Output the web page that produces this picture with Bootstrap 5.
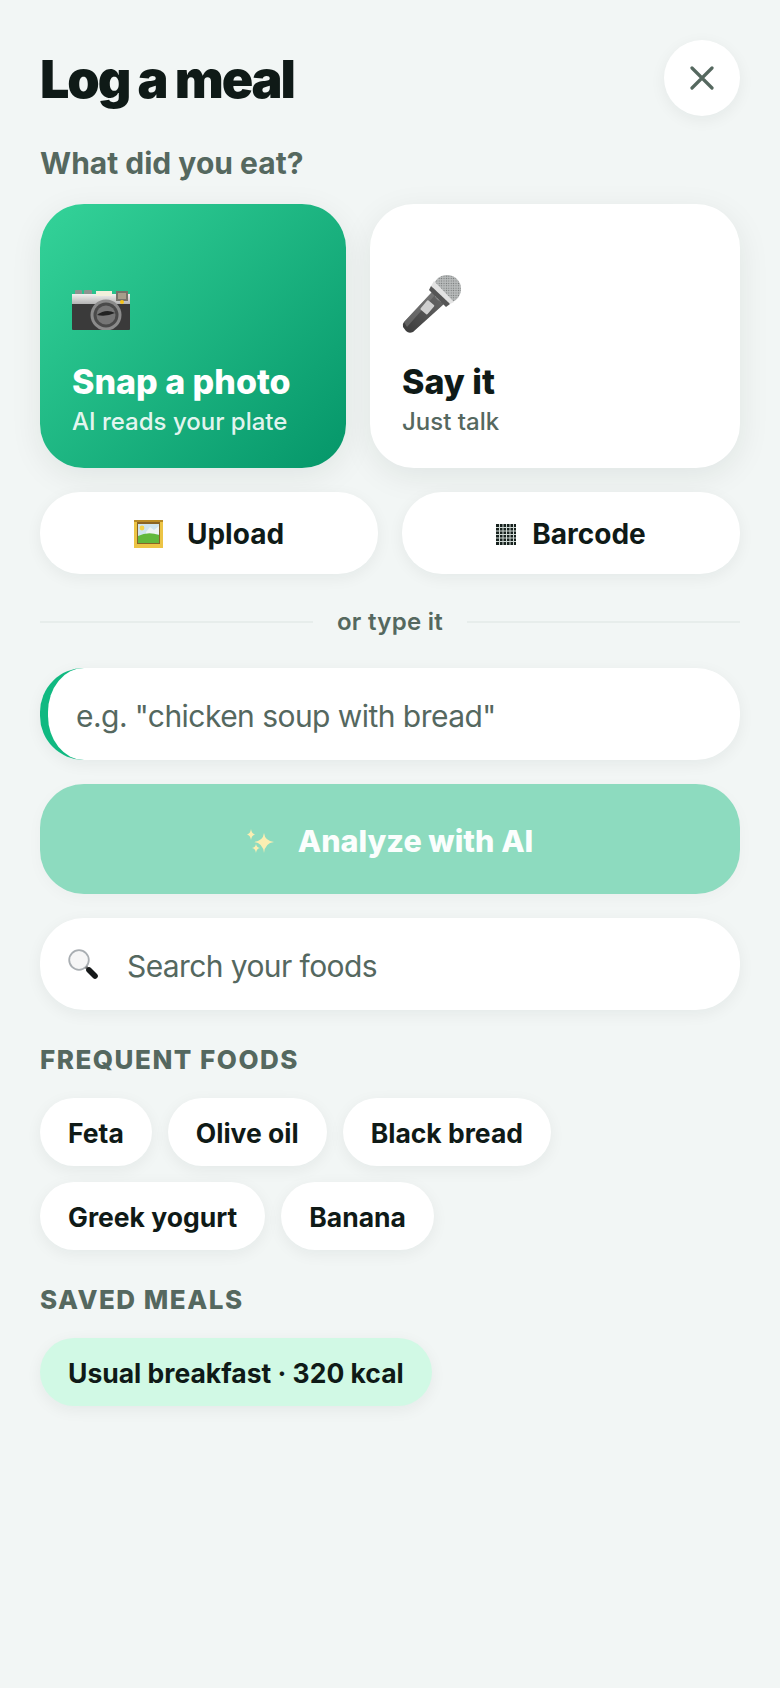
<!DOCTYPE html>
<html lang="en">
  <head>
    <meta charset="UTF-8" />
    <meta name="viewport" content="width=device-width, initial-scale=1.0" />
    <title>Log a meal</title>
    <link
      href="https://cdn.jsdelivr.net/npm/bootstrap@5.3.0/dist/css/bootstrap.min.css"
      rel="stylesheet"
    />
    <style>
      body {
        background: #f2f6f5;
        color: #0f1a17;
        font-family: Inter, "Liberation Sans", sans-serif;
      }
      .sheet {
        padding: 40px 40px 40px;
      }
      .sheet-title {
        font-size: 52px;
        font-weight: 900;
        letter-spacing: -2.1px;
        line-height: 80px;
        height: 76px;
        margin: 0;
      }
      .close-btn {
        width: 76px;
        height: 76px;
        background: #fff;
        border: 0;
        box-shadow: 0 4px 16px rgba(15, 40, 30, 0.06);
      }
      .ask-label {
        color: #55685f;
        font-size: 30px;
        font-weight: 700;
        line-height: 36px;
        margin: 29px 0 23px;
      }
      .big-card {
        height: 264px;
        border-radius: 44px;
        padding: 0 32px 30px;
        background: #fff;
        box-shadow: 0 8px 32px rgba(15, 40, 30, 0.08);
      }
      .big-card.snap {
        flex: 0 0 306px;
        color: #fff;
        background: linear-gradient(135deg, #34d399, #059669);
      }
      .big-card.say {
        flex: 1 1 0;
      }
      .big-card h2 {
        font-size: 34px;
        font-weight: 800;
        line-height: 40px;
        margin: 0;
      }
      .big-card p {
        color: #55685f;
        font-size: 24px;
        font-weight: 500;
        line-height: 32px;
        margin: 4px 0 0;
      }
      .big-card.snap p {
        color: rgba(255, 255, 255, 0.9);
      }
      .snap .tile-icon {
        margin-bottom: 32px;
      }
      .say .tile-icon {
        margin-bottom: 28px;
      }
      .row-gap {
        gap: 24px;
      }
      .small-btn {
        flex: 1 1 0;
        height: 82px;
        padding-top: 8px;
        border-radius: 40px;
        background: #fff;
        color: #0f1a17;
        font-size: 28px;
        font-weight: 700;
        box-shadow: 0 4px 16px rgba(15, 40, 30, 0.06);
      }
      .or-row {
        color: #55685f;
        font-size: 24px;
        font-weight: 600;
        letter-spacing: 0.3px;
        line-height: 32px;
        margin: 31px 0 30px;
      }
      .or-row span {
        padding-top: 1px;
      }
      .or-row i {
        flex: 1 1 0;
        height: 2px;
        background: #e7edeb;
      }
      .text-box,
      .search-box {
        height: 92px;
        border-radius: 44px;
        background: #fff;
        box-shadow: 0 4px 16px rgba(15, 40, 30, 0.06);
      }
      .text-box {
        border: 0;
        border-left: 8px solid #10b981;
        padding: 3px 28px 0;
        font-size: 30px;
        letter-spacing: -0.55px;
      }
      .text-box:focus,
      .search-input:focus {
        outline: 0;
        box-shadow: none;
      }
      .text-box::placeholder,
      .search-input::placeholder {
        color: #55685f;
        opacity: 1;
      }
      .analyze-btn {
        height: 110px;
        padding-top: 10px;
        border: 0;
        border-radius: 44px;
        background: #8ddbbf;
        color: #fbfefd;
        font-size: 30.5px;
        font-weight: 800;
        box-shadow: 0 4px 16px rgba(15, 40, 30, 0.03);
      }
      .search-box {
        padding-left: 28px;
      }
      .search-input {
        border: 0;
        background: transparent;
        color: #0f1a17;
        font-size: 30px;
        letter-spacing: -0.6px;
        padding: 4px 0 0 29px;
        width: 100%;
      }
      .group-label {
        color: #55685f;
        font-size: 26px;
        font-weight: 800;
        letter-spacing: 1.5px;
        line-height: 32px;
        margin: 0 0 22px;
      }
      .frequent {
        margin-top: 34px;
      }
      .saved-label {
        margin-top: 34px;
      }
      .chip-wrap {
        gap: 16px;
      }
      .chip {
        height: 68px;
        padding: 3px 28px 0;
        border-radius: 34px;
        background: #fff;
        color: #0f1a17;
        font-size: 26.5px;
        font-weight: 700;
        box-shadow: 0 4px 16px rgba(15, 40, 30, 0.06);
      }
      .chip.saved {
        background: #d1f9e5;
      }
      .frequent-chips {
        width: 560px;
      }
    </style>
  </head>
  <body>
    <div class="sheet">
      <div class="d-flex justify-content-between align-items-center">
        <h1 class="sheet-title">Log a meal</h1>
        <button class="close-btn rounded-circle d-flex align-items-center justify-content-center p-0" aria-label="Close">
          <svg width="24" height="24" viewBox="0 0 24 24">
            <path d="M2 2 L22 22 M22 2 L2 22" stroke="#55685f" stroke-width="3.2" stroke-linecap="round" fill="none" />
          </svg>
        </button>
      </div>

      <div class="ask-label">What did you eat?</div>

      <!-- Two big tiles -->
      <div class="d-flex row-gap">
        <div class="big-card snap d-flex flex-column justify-content-end">
          <svg class="tile-icon" width="58" height="40" viewBox="0 0 58 40">
            <defs>
              <linearGradient id="band" x1="0" y1="0" x2="0" y2="1">
                <stop offset="0" stop-color="#f1f1ef" />
                <stop offset="1" stop-color="#b4b4b4" />
              </linearGradient>
            </defs>
            <rect x="3" y="0" width="7" height="6" rx="1" fill="#8d9491" />
            <rect x="12" y="0" width="8" height="6" rx="1" fill="#8d9491" />
            <rect x="0" y="4" width="58" height="36" rx="1" fill="#3a3a3a" />
            <rect x="0" y="4" width="58" height="10" fill="url(#band)" />
            <rect x="24" y="1" width="16" height="5" fill="#f2f0dc" />
            <rect x="44" y="1" width="12" height="10" fill="#77736a" />
            <rect x="46" y="3" width="8" height="6" fill="#a79e8b" />
            <circle cx="34" cy="25" r="15.5" fill="#8b8b8b" />
            <circle cx="34" cy="25" r="12.5" fill="#4a4a4a" />
            <circle cx="34" cy="25" r="9.5" fill="#767676" />
            <path d="M25 25 Q34 18 43 23 Q34 27 25 25 Z" fill="#222" />
            <circle cx="50" cy="12" r="2" fill="#f5c518" />
          </svg>
          <h2>Snap a photo</h2>
          <p>AI reads your plate</p>
        </div>
        <div class="big-card say d-flex flex-column justify-content-end">
          <svg class="tile-icon" width="59" height="59" viewBox="0 0 59 59">
            <defs>
              <linearGradient id="grip" x1="0" y1="1" x2="1" y2="0">
                <stop offset="0" stop-color="#3a3a3a" />
                <stop offset="1" stop-color="#6a6a6a" />
              </linearGradient>
              <pattern id="mesh" width="2.4" height="2.4" patternUnits="userSpaceOnUse">
                <rect width="2.4" height="2.4" fill="#b8bbbb" />
                <circle cx="1.2" cy="1.2" r="0.6" fill="#6f7272" />
              </pattern>
            </defs>
            <path d="M30 17 L42 29 L11 57 Q7 59 4 56 L1 52 Q0 49 2 47 Z" fill="url(#grip)" />
            <path d="M2 47 L30 17 L33 20 L5 52 Z" fill="#8a8a8a" opacity="0.45" />
            <rect x="21" y="26" width="9" height="12" rx="1" transform="rotate(40 25 32)" fill="#d0d0d0" />
            <circle cx="45" cy="14" r="14" fill="url(#mesh)" />
            <path d="M32 6 L52 27 L48 29 L29 11 Z" fill="#e2e2e2" />
            <path d="M29 11 L48 29 L44 32 L27 15 Z" fill="#555" />
          </svg>
          <h2>Say it</h2>
          <p>Just talk</p>
        </div>
      </div>

      <div class="d-flex row-gap mt-4">
        <button class="small-btn btn border-0 d-flex align-items-center justify-content-center">
          <svg class="me-4" width="29" height="28" viewBox="0 0 29 28">
            <rect width="29" height="28" fill="#ecc445" />
            <rect x="0" y="0" width="29" height="2" fill="#b98a24" />
            <rect x="3" y="2" width="23" height="22" fill="#8a6425" />
            <rect x="4" y="4" width="21" height="19" fill="#cfe4ee" />
            <circle cx="8" cy="8" r="2.4" fill="#f4d34a" />
            <path d="M12 12 L16 7 L20 10 L25 6 V14 H12 Z" fill="#eef3f4" />
            <path d="M4 16 Q14 11 25 15 V23 H4 Z" fill="#62b83c" />
          </svg>
          Upload
        </button>
        <button class="small-btn btn border-0 d-flex align-items-center justify-content-center">
          <svg class="me-3" width="20" height="21" viewBox="0 0 20 21">
            <rect width="20" height="21" fill="#17211e" />
            <path d="M3.5 0 V21 M7 0 V21 M10.5 0 V21 M14 0 V21 M17.5 0 V21 M0 3.5 H20 M0 7 H20 M0 10.5 H20 M0 14 H20 M0 17.5 H20" stroke="#cfd8d4" stroke-width="1" fill="none" />
          </svg>
          Barcode
        </button>
      </div>

      <div class="or-row d-flex align-items-center gap-4">
        <i></i>
        <span>or type it</span>
        <i></i>
      </div>

      <input class="text-box form-control" type="text" placeholder='e.g. "chicken soup with bread"' />

      <button class="analyze-btn btn w-100 mt-4 d-flex align-items-center justify-content-center">
        <svg class="me-4" width="27" height="25" viewBox="0 0 27 25">
          <path d="M17 4 Q18 12 27 13 Q18 14 17 24 Q16 14 7 13 Q16 12 17 4 Z" fill="#fbeeb2" />
          <path d="M4 0 Q4.6 4.6 8 5.5 Q4.6 6.4 4 11 Q3.4 6.4 0 5.5 Q3.4 4.6 4 0 Z" fill="#fbeeb2" />
          <path d="M9 15 Q9.5 18.4 13 19 Q9.5 19.6 9 24 Q8.5 19.6 5 19 Q8.5 18.4 9 15 Z" fill="#fbeeb2" />
        </svg>
        Analyze with AI
      </button>

      <div class="search-box d-flex align-items-center mt-4">
        <svg class="flex-shrink-0" width="30" height="30" viewBox="0 0 30 30">
          <circle cx="11" cy="11" r="9.8" fill="#f6f6f6" stroke="#a9aeb2" stroke-width="1.8" />
          <path d="M18 18 L21 21" stroke="#6d6d6d" stroke-width="3" />
          <path d="M21 21 L27 27" stroke="#16191a" stroke-width="5.6" stroke-linecap="round" />
        </svg>
        <input class="search-input" type="text" placeholder="Search your foods" />
      </div>

      <!-- Frequent foods -->
      <p class="group-label frequent">FREQUENT FOODS</p>
      <div class="chip-wrap frequent-chips d-flex flex-wrap">
        <button class="chip btn border-0">Feta</button>
        <button class="chip btn border-0">Olive oil</button>
        <button class="chip btn border-0">Black bread</button>
        <button class="chip btn border-0">Greek yogurt</button>
        <button class="chip btn border-0">Banana</button>
      </div>

      <p class="group-label saved-label">SAVED MEALS</p>
      <div class="chip-wrap d-flex flex-wrap">
        <button class="chip saved btn border-0">Usual breakfast · 320 kcal</button>
      </div>
    </div>
    <script src="https://cdn.jsdelivr.net/npm/bootstrap@5.3.0/dist/js/bootstrap.bundle.min.js"></script>
  </body>
</html>
